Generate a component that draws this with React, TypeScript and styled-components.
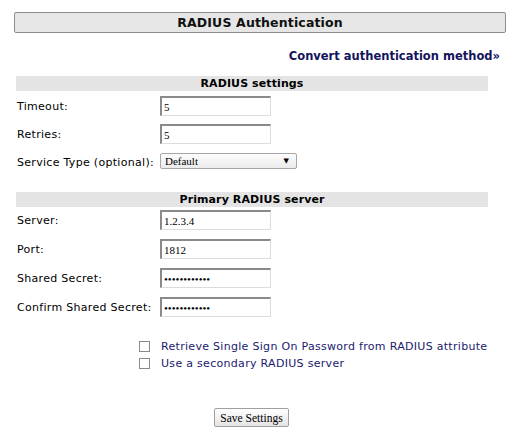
import React from 'react';
import styled, { createGlobalStyle } from 'styled-components';

const GlobalStyle = createGlobalStyle`
  body {
    margin: 0;
    background: #fff;
    font-family: 'DejaVu Sans', Verdana, sans-serif;
    font-size: 11px;
    letter-spacing: 0.3px;
    color: #000;
  }
`;

const Page = styled.div`
  width: 522px;
  height: 442px;
  padding: 12px 0 0 0;
  box-sizing: border-box;
`;

const TitleBar = styled.div`
  margin: 0 16px 0 14px;
  height: 21px;
  box-sizing: border-box;
  border: 1px solid #8c8c8c;
  border-radius: 2px;
  background: #e6e6e6;
  display: flex;
  align-items: center;
  justify-content: center;
  font-weight: bold;
  font-size: 12.5px;
  letter-spacing: 0.15px;
  color: #111;
`;

const LinkRow = styled.div`
  display: flex;
  justify-content: flex-end;
  align-items: center;
  padding: 3px 22px 0 0;
  height: 43px;
  box-sizing: border-box;
`;

const Link = styled.a`
  color: #14145c;
  font-weight: bold;
  font-size: 11.5px;
  letter-spacing: 0;
  text-decoration: none;
  cursor: pointer;
`;

const Form = styled.div`
  margin: 0 34px 0 16px;
`;

const SectionHeader = styled.div<{ $top: number }>`
  margin-top: ${(p) => p.$top}px;
  height: 15px;
  background: #e4e4e4;
  display: flex;
  align-items: center;
  justify-content: center;
  font-weight: bold;
  font-size: 11px;
  letter-spacing: 0.1px;
`;

const Rows = styled.div<{ $gap: number; $pad: number }>`
  display: flex;
  flex-direction: column;
  gap: ${(p) => p.$gap}px;
  padding-top: ${(p) => p.$pad}px;
`;

const Row = styled.div`
  display: flex;
  align-items: center;
  height: 20px;
`;

const Label = styled.label`
  width: 144px;
  padding-left: 1px;
  box-sizing: border-box;
  white-space: nowrap;
`;

const TextInput = styled.input`
  width: 111px;
  height: 20px;
  box-sizing: border-box;
  margin: 0;
  padding: 0 2px;
  border-style: solid;
  border-width: 2px 1px 1px 2px;
  border-color: #8a8a8a #dcdcdc #dcdcdc #8a8a8a;
  font-family: 'Liberation Serif', 'Times New Roman', serif;
  font-size: 11px;
  letter-spacing: 0;
  color: #000;
  background: #fff;
  outline: none;
`;

const Select = styled.div`
  width: 137px;
  height: 16px;
  margin-top: -3px;
  box-sizing: border-box;
  border: 1px solid #a6a6a6;
  border-radius: 2px;
  background: linear-gradient(#fcfcfc, #ebebeb);
  display: flex;
  align-items: center;
  justify-content: space-between;
  padding: 0 7px 0 4px;
  font-family: 'Liberation Serif', 'Times New Roman', serif;
  font-size: 11px;
  letter-spacing: 0;
`;

const Arrow = styled.span`
  font-family: 'DejaVu Sans', sans-serif;
  font-size: 7px;
`;

const Checks = styled.div`
  margin: 23px 0 0 139px;
  display: flex;
  flex-direction: column;
  gap: 4px;
`;

const CheckRow = styled.label`
  display: flex;
  align-items: center;
  height: 13px;
  color: #1a1a6e;
`;

const Box = styled.input.attrs({ type: 'checkbox' })`
  appearance: none;
  width: 11px;
  height: 11px;
  margin: 0 11px 0 0;
  border: 1px solid #8a8a8a;
  background: #fff;
  box-sizing: border-box;
`;

const ButtonRow = styled.div`
  display: flex;
  padding: 38px 0 0 214px;
`;

const Button = styled.button`
  width: 75px;
  height: 19px;
  padding: 0;
  border: 1px solid #a0a0a0;
  border-radius: 2px;
  background: linear-gradient(#ffffff, #e4e4e4);
  font-family: 'Liberation Serif', 'Times New Roman', serif;
  font-size: 11.5px;
  letter-spacing: 0;
  color: #000;
`;

const settings = [
  { label: 'Timeout:', value: '5' },
  { label: 'Retries:', value: '5' },
];

const server = [
  { label: 'Server:', value: '1.2.3.4', type: 'text' },
  { label: 'Port:', value: '1812', type: 'text' },
  { label: 'Shared Secret:', value: 'secretsecret', type: 'password' },
  { label: 'Confirm Shared Secret:', value: 'secretsecret', type: 'password' },
];

const App = () => {
  return (
    <Page>
      <GlobalStyle />
      <TitleBar>RADIUS Authentication</TitleBar>
      <LinkRow>
        <Link>Convert authentication method»</Link>
      </LinkRow>
      <Form>
        <SectionHeader $top={0}>RADIUS settings</SectionHeader>
        <Rows $gap={8} $pad={5}>
          {settings.map((s) => (
            <Row key={s.label}>
              <Label>{s.label}</Label>
              <TextInput type="text" defaultValue={s.value} />
            </Row>
          ))}
          <Row>
            <Label>Service Type (optional):</Label>
            <Select>
              <span>Default</span>
              <Arrow>▼</Arrow>
            </Select>
          </Row>
        </Rows>
        <SectionHeader $top={20}>Primary RADIUS server</SectionHeader>
        <Rows $gap={9} $pad={3}>
          {server.map((s) => (
            <Row key={s.label}>
              <Label>{s.label}</Label>
              <TextInput type={s.type} defaultValue={s.value} />
            </Row>
          ))}
        </Rows>
      </Form>
      <Checks>
        <CheckRow>
          <Box />
          Retrieve Single Sign On Password from RADIUS attribute
        </CheckRow>
        <CheckRow>
          <Box />
          Use a secondary RADIUS server
        </CheckRow>
      </Checks>
      <ButtonRow>
        <Button>Save Settings</Button>
      </ButtonRow>
    </Page>
  );
};

export default App;
